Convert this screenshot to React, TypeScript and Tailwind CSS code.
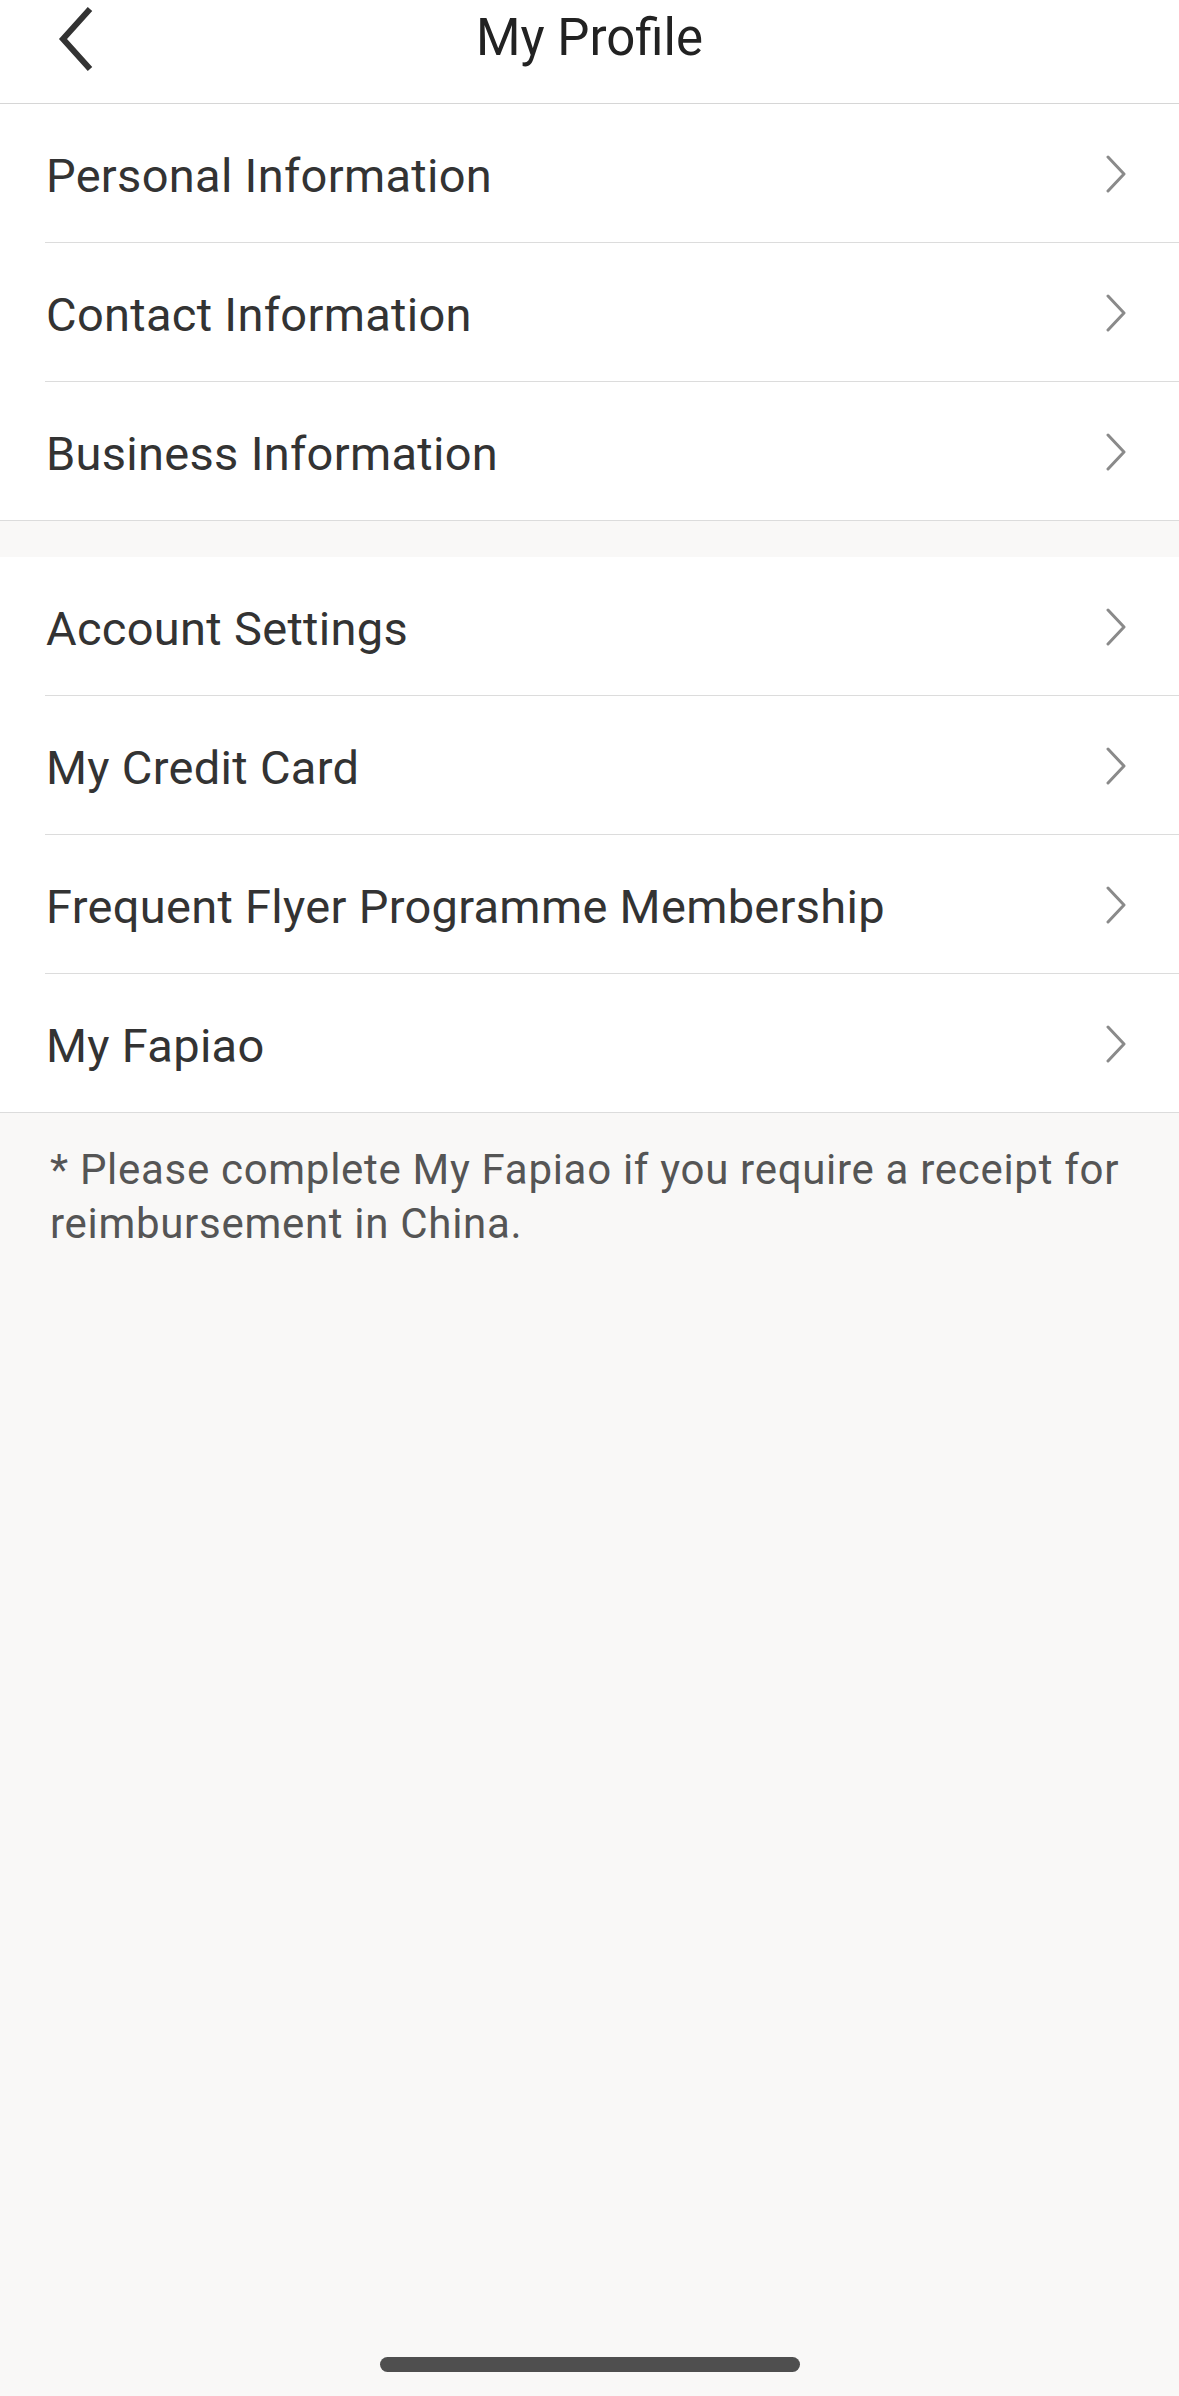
import React from "react";

const Chevron = () => (
  <svg width="22" height="38" viewBox="0 0 22 38" className="shrink-0">
    <path d="M3 2 L19 19 L3 36" fill="none" stroke="#8a8a8a" strokeWidth="3" strokeLinecap="round" strokeLinejoin="round" />
  </svg>
);

const Row = ({ label, last }: { label: string; last?: boolean }) => (
  <div className="relative flex h-[139px] items-center justify-between bg-white pl-[46px] pr-[52px]">
    <span className="pt-[6px] text-[47px] tracking-[0.3px] text-[#333333]">{label}</span>
    <Chevron />
    <div className={`absolute bottom-0 right-0 h-px bg-[#dcdcdc] ${last ? "left-0" : "left-[45px]"}`} />
  </div>
);

export default function App() {
  return (
    <div
      className="flex h-[2396px] w-[1179px] flex-col bg-[#f9f8f7]"
      style={{ fontFamily: "Roboto, 'Liberation Sans', sans-serif" }}
    >
      <div className="relative flex h-[104px] shrink-0 items-start justify-center border-b border-[#d6d6d6] bg-white">
        <svg width="44" height="66" viewBox="0 0 44 66" className="absolute left-[54px] top-[5px]">
          <path d="M36 4 L9 34 L36 64" fill="none" stroke="#333333" strokeWidth="6" strokeLinejoin="miter" />
        </svg>
        <span className="mt-[8px] text-[51px] leading-[60px] text-[#222222]">My Profile</span>
      </div>
      <div className="flex flex-col">
        <Row label="Personal Information" />
        <Row label="Contact Information" />
        <Row label="Business Information" last />
      </div>
      <div className="h-[36px]" />
      <div className="flex flex-col">
        <Row label="Account Settings" />
        <Row label="My Credit Card" />
        <Row label="Frequent Flyer Programme Membership" />
        <Row label="My Fapiao" last />
      </div>
      <p className="px-[50px] pt-[30px] text-[42px] leading-[54px] tracking-[0.7px] text-[#555555]">
        * Please complete My Fapiao if you require a receipt for reimbursement in China.
      </p>
      <div className="flex-1" />
      <div className="flex justify-center pb-[24px]">
        <div className="h-[15px] w-[420px] rounded-full bg-[#4f4f4f]" />
      </div>
    </div>
  );
}
